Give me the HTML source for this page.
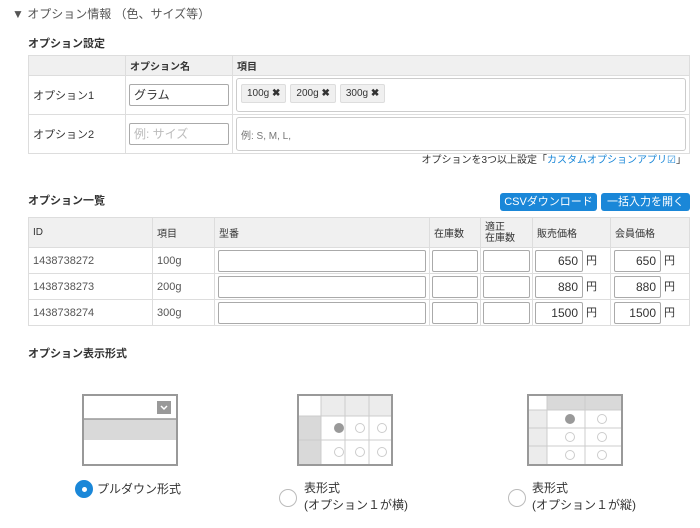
<!DOCTYPE html>
<html><head><meta charset="utf-8"><style>
*{box-sizing:border-box;margin:0;padding:0}
body{width:700px;height:528px;overflow:hidden;background:#fff;font-family:"Liberation Sans","Noto Sans CJK JP",sans-serif;font-size:11px;color:#333;position:relative}
.a{position:absolute;white-space:nowrap}
.b{font-weight:bold}
table{position:absolute;border-collapse:collapse;left:28px}
td{border:1px solid #ddd;padding:0 4px;font-size:11px;vertical-align:middle}
.h td{background:#f0f0f0;font-size:10px}
.in{border:1px solid #aaa;border-radius:2px;background:#fff;height:22px;display:inline-block;vertical-align:middle}
.tag{display:inline-block;background:#f0f0f0;border:1px solid #ddd;border-radius:2px;padding:3px 5px;font-size:10px;margin-right:4px}
.btn{position:absolute;background:#1a87d8;color:#fff;border-radius:3px;height:18px;font-size:11px;text-align:center;line-height:18px}
.num{text-align:right;padding-right:4px;line-height:20px;font-size:12px}
.rad{position:absolute;width:18px;height:18px;border-radius:50%;border:1px solid #bbb;background:#fff}
</style></head><body>
<div class="a" style="left:12px;top:5px;font-size:12px;color:#555">▼ オプション情報 （色、サイズ等）</div>
<div class="a b" style="left:28px;top:35px;font-size:11px">オプション設定</div>
<table style="top:55px;width:662px">
<tr class="h" style="height:20px"><td style="width:97px"></td><td style="width:107px;font-weight:bold">オプション名</td><td style="font-weight:bold">項目</td></tr>
<tr style="height:38px"><td>オプション1</td><td style="padding:0 3px"><div class="in" style="width:100px;font-size:12px;line-height:20px;padding-left:4px">グラム</div></td><td style="padding:2px 3px"><div style="border:1px solid #ccc;border-radius:3px;height:34px;padding:5px 4px"><span class="tag">100g <b>✖</b></span><span class="tag">200g <b>✖</b></span><span class="tag">300g <b>✖</b></span></div></td></tr>
<tr style="height:38px"><td>オプション2</td><td style="padding:0 3px"><div class="in" style="width:100px;font-size:12px;line-height:20px;padding-left:4px;color:#bbb">例: サイズ</div></td><td style="padding:2px 3px"><div style="border:1px solid #ccc;border-radius:3px;height:34px;padding:9px 4px;color:#777;font-size:10px">例: S, M, L,</div></td></tr>
</table>
<div class="a" style="right:14px;top:151px;font-size:10px;color:#333">オプションを3つ以上設定「<span style="color:#1a87d8">カスタムオプションアプリ☑</span>」</div>
<div class="a b" style="left:28px;top:192px">オプション一覧</div>
<div class="btn" style="left:500px;top:193px;width:97px">CSVダウンロード</div>
<div class="btn" style="left:601px;top:193px;width:89px">一括入力を開く</div>
<table style="top:217px;width:662px">
<tr class="h" style="height:30px"><td style="width:124px">ID</td><td style="width:62px">項目</td><td style="width:214px">型番</td><td style="width:51px">在庫数</td><td style="width:52px;line-height:11px">適正<br>在庫数</td><td style="width:78px">販売価格</td><td>会員価格</td></tr>
<tr style="height:26px"><td style="color:#555">1438738272</td><td style="color:#555">100g</td><td style="padding:0 3px"><div class="in" style="width:208px"></div></td><td style="padding:0 2px"><div class="in" style="width:46px"></div></td><td style="padding:0 2px"><div class="in" style="width:47px"></div></td><td style="padding:0 2px"><div class="in num" style="width:48px">650</div> 円</td><td style="padding:0 3px"><div class="in num" style="width:47px">650</div> 円</td></tr>
<tr style="height:26px"><td style="color:#555">1438738273</td><td style="color:#555">200g</td><td style="padding:0 3px"><div class="in" style="width:208px"></div></td><td style="padding:0 2px"><div class="in" style="width:46px"></div></td><td style="padding:0 2px"><div class="in" style="width:47px"></div></td><td style="padding:0 2px"><div class="in num" style="width:48px">880</div> 円</td><td style="padding:0 3px"><div class="in num" style="width:47px">880</div> 円</td></tr>
<tr style="height:26px"><td style="color:#555">1438738274</td><td style="color:#555">300g</td><td style="padding:0 3px"><div class="in" style="width:208px"></div></td><td style="padding:0 2px"><div class="in" style="width:46px"></div></td><td style="padding:0 2px"><div class="in" style="width:47px"></div></td><td style="padding:0 2px"><div class="in num" style="width:48px">1500</div> 円</td><td style="padding:0 3px"><div class="in num" style="width:47px">1500</div> 円</td></tr>
</table>
<div class="a b" style="left:28px;top:345px">オプション表示形式</div>
<svg class="a" style="left:0;top:390px" width="700" height="80">
<g transform="translate(82,4)" stroke="#999" stroke-width="2" fill="none">
<rect x="1" y="1" width="94" height="70" fill="#fff"/>
<rect x="2" y="25" width="92" height="21" fill="#d9d9d9" stroke="none"/>
<line x1="1" y1="25" x2="95" y2="25" stroke-width="1.5"/>
<rect x="75" y="7" width="14" height="13" fill="#999" stroke="none"/>
<path d="M79 12l3 3 3-3" stroke="#fff" stroke-width="1.5"/>
</g>
<g transform="translate(297,4)" stroke="#999" fill="none">
<rect x="24" y="1" width="71" height="21" fill="#ececec" stroke="none"/>
<rect x="1" y="22" width="23" height="49" fill="#d9d9d9" stroke="none"/>
<path d="M24 1v70M1 22h94M1 46h94M48 1v70M72 1v70" stroke="#ccc"/>
<rect x="1" y="1" width="94" height="70" stroke-width="2"/>
<circle cx="42" cy="34" r="5" fill="#999" stroke="none"/>
<circle cx="63" cy="34" r="4.5" stroke="#ccc"/><circle cx="85" cy="34" r="4.5" stroke="#ccc"/>
<circle cx="42" cy="58" r="4.5" stroke="#ccc"/><circle cx="63" cy="58" r="4.5" stroke="#ccc"/><circle cx="85" cy="58" r="4.5" stroke="#ccc"/>
</g>
<g transform="translate(527,4)" stroke="#999" fill="none">
<rect x="20" y="1" width="75" height="15" fill="#d9d9d9" stroke="none"/>
<rect x="1" y="16" width="19" height="55" fill="#ececec" stroke="none"/>
<path d="M20 1v70M1 16h94M1 34h94M1 52h94M58 1v70" stroke="#ccc"/>
<rect x="1" y="1" width="94" height="70" stroke-width="2"/>
<circle cx="43" cy="25" r="5" fill="#999" stroke="none"/><circle cx="75" cy="25" r="4.5" stroke="#ccc"/>
<circle cx="43" cy="43" r="4.5" stroke="#ccc"/><circle cx="75" cy="43" r="4.5" stroke="#ccc"/>
<circle cx="43" cy="61" r="4.5" stroke="#ccc"/><circle cx="75" cy="61" r="4.5" stroke="#ccc"/>
</g>
</svg>
<div class="rad" style="left:75px;top:480px;background:#1a87d8;border-color:#1a87d8"><div style="position:absolute;left:6px;top:6px;width:5px;height:5px;border-radius:50%;background:#fff"></div></div>
<div class="a" style="left:97px;top:480px;font-size:12px">プルダウン形式</div>
<div class="rad" style="left:279px;top:489px"></div>
<div class="a" style="left:304px;top:480px;font-size:12px;line-height:17px">表形式<br>(オプション１が横)</div>
<div class="rad" style="left:508px;top:489px"></div>
<div class="a" style="left:532px;top:480px;font-size:12px;line-height:17px">表形式<br>(オプション１が縦)</div>
</body></html>
